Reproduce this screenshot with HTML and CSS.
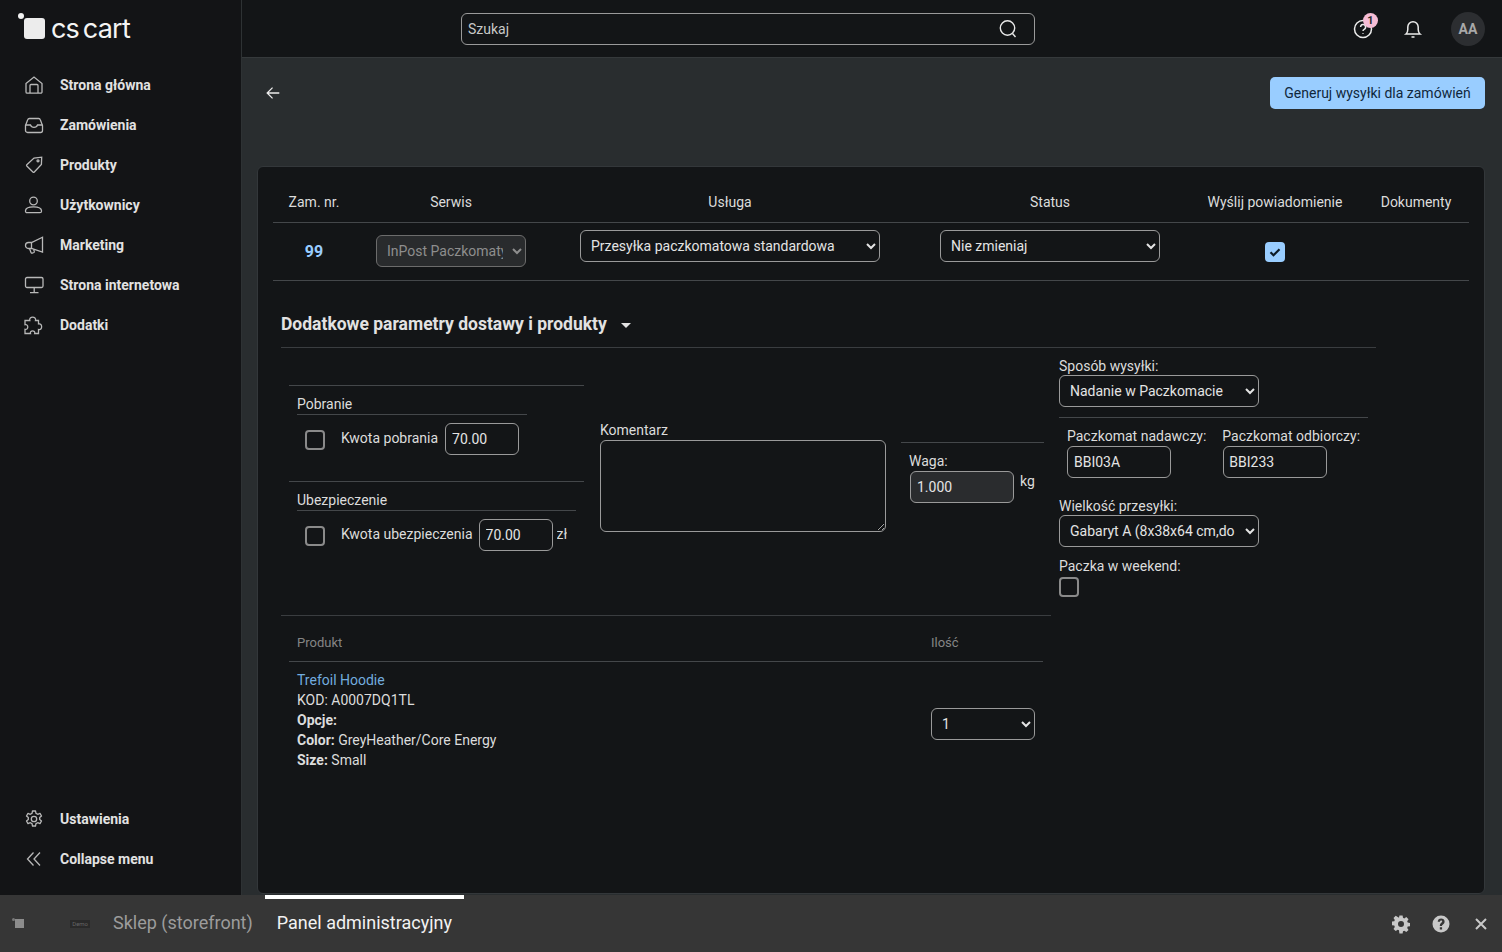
FILE: index.html
```html
<!DOCTYPE html>
<html lang="pl">

<head>
    <meta charset="UTF-8">
    <meta name="viewport" content="width=device-width, initial-scale=1.0">
    <title>Generuj wysyłki</title>

    <link rel="stylesheet" href="styles.css">
</head>

<body>
    <div class="app">
        <aside class="sidebar">
            <div class="logo">
                <span class="logo_dot"></span>
                <span class="logo_box"></span>
                <span class="logo_text">cs cart</span>
            </div>
            <ul class="nav">
                <li><a href="#">
                    <svg viewBox="0 0 20 20"><path d="M2 8.600 10 2l8 6.600v8.400a1.200 1.200 0 0 1-1.200 1.200H3.200A1.200 1.200 0 0 1 2 17z"/><path d="M6 18v-7.500a1 1 0 0 1 1-1h6a1 1 0 0 1 1 1V18"/></svg>
                    Strona główna</a></li>
                <li><a href="#">
                    <svg viewBox="0 0 20 20"><path d="M1.500 10.500 3.700 4.700A1.800 1.800 0 0 1 5.400 3.500h9.200a1.800 1.800 0 0 1 1.700 1.200l2.200 5.800v5a2 2 0 0 1-2 2h-13a2 2 0 0 1-2-2z"/><path d="M1.500 10h5c.5 1.500 1.800 2.300 3.500 2.300s3-.8 3.500-2.300h5"/></svg>
                    Zamówienia</a></li>
                <li><a href="#">
                    <svg viewBox="0 0 20 20"><path d="M2.800 9.700 10 3l7.700-.8-.3 7.200-7.100 7.600a1 1 0 0 1-1.400 0L2.800 11a1 1 0 0 1 0-1.300z"/><circle cx="14" cy="5.800" r="1"/></svg>
                    Produkty</a></li>
                <li><a href="#">
                    <svg viewBox="0 0 20 20"><circle cx="9.500" cy="6" r="3.800"/><path d="M1.500 15.800c0-2.700 3-4 8-4s8 1.300 8 4v.4a1.500 1.500 0 0 1-1.500 1.500H3a1.500 1.500 0 0 1-1.500-1.500z"/></svg>
                    Użytkownicy</a></li>
                <li><a href="#">
                    <svg viewBox="0 0 20 20"><path d="M18.500 2.200v14.800L7.500 13.500H4.500a3 3 0 0 1 0-6h3z"/><path d="M7.500 7.500v6"/><path d="m5.500 13.500 1.500 4a1 1 0 0 0 1.300.6l1.500-.6a1 1 0 0 0 .5-1.300l-.7-1.800"/></svg>
                    Marketing</a></li>
                <li><a href="#">
                    <svg viewBox="0 0 20 20"><rect x="1.500" y="2.500" width="17.500" height="10" rx="1.500"/><path d="M10.200 12.500v5M6 17.700h8.500"/></svg>
                    Strona internetowa</a></li>
                <li><a href="#">
                    <svg viewBox="0 0 20 20"><path d="M1 5.500h4.800c-1.300-4.500 7-4.500 5.700 0h3v3.500c4.200-1.200 4.200 6.800 0 5.500v4h-3.800c1-3.500-5.200-3.500-4.200 0H1v-4.200c3.700 1 3.700-5.600 0-4.600z"/></svg>
                    Dodatki</a></li>
            </ul>
            <ul class="nav nav_bottom">
                <li><a href="#">
                    <svg viewBox="0 0 20 20"><circle cx="10" cy="10" r="2.700"/><path d="M8.500 2h3l.5 2.400 1.700.9 2.300-.9 1.500 2.600-1.800 1.600v1.800l1.800 1.600-1.500 2.600-2.300-.9-1.700.9-.5 2.400h-3l-.5-2.400-1.700-.9-2.300.9-1.500-2.600 1.800-1.600V8.600L2.500 7l1.500-2.600 2.300.9L8 4.400z" stroke-linejoin="round"/></svg>
                    Ustawienia</a></li>
                <li><a href="#">
                    <svg viewBox="0 0 20 20"><path d="M9.500 3.500 3.500 10l6 6.500M16 3.500 10 10l6 6.500"/></svg>
                    Collapse menu</a></li>
            </ul>
        </aside>

        <div class="main">
            <header class="topbar">
                <div class="search">
                    <span class="search_text">Szukaj</span>
                    <svg viewBox="0 0 20 20"><circle cx="9.500" cy="9" r="7.200"/><path d="m14.500 14.500 3 3.500"/></svg>
                </div>
                <div class="top_icons">
                    <div class="help_icon">
                        <svg viewBox="0 0 20 20"><circle cx="10" cy="10" r="8.500"/><path d="M7.600 8a2.500 2.500 0 1 1 3.600 2.300c-.8.400-1.200 1-1.200 1.800"/><path d="M10 14.300v.7"/></svg>
                        <span class="badge">1</span>
                    </div>
                    <svg class="bell" viewBox="0 0 20 20"><path d="M3 15c1.500-1.200 1.800-2.500 1.800-4.500V8a5.200 5.200 0 0 1 10.400 0v2.500c0 2 .3 3.300 1.800 4.500z"/><path d="M8.500 18h3"/></svg>
                    <div class="avatar">AA</div>
                </div>
            </header>

            <div class="toolbar">
                <svg viewBox="0 0 20 20"><path d="M17 10H3.500M9.500 4 3.500 10l6 6"/></svg>
                <button class="btn_primary">Generuj wysyłki dla zamówień</button>
            </div>

            <div class="card">
                <div class="ship_grid ship_head">
                    <div>Zam. nr.</div>
                    <div>Serwis</div>
                    <div>Usługa</div>
                    <div>Status</div>
                    <div>Wyślij powiadomienie</div>
                    <div>Dokumenty</div>
                </div>
                <div class="ship_grid ship_row">
                    <a class="order_no" href="#">99</a>
                    <select class="sel sel_service" disabled>
                        <option>InPost Paczkomaty</option>
                    </select>
                    <select class="sel sel_usluga">
                        <option>Przesyłka paczkomatowa standardowa</option>
                    </select>
                    <select class="sel sel_status">
                        <option>Nie zmieniaj</option>
                    </select>
                    <span class="check checked">
                        <svg viewBox="0 0 20 20"><path d="m5.500 10.200 3 3 6-6"/></svg>
                    </span>
                    <div></div>
                </div>

                <div class="details">
                    <h3 class="details_head">Dodatkowe parametry dostawy i produkty <span class="caret"></span></h3>

                    <div class="details_body">
                        <div class="details_left">
                            <div class="params">
                                <div class="col_money">
                                    <div class="field_group">
                                        <div class="group_title title_short">Pobranie</div>
                                        <div class="money_row">
                                            <span class="check"></span>
                                            <label>Kwota pobrania</label>
                                            <input class="inp inp_small" type="text" value="70.00">
                                        </div>
                                    </div>
                                    <div class="field_group">
                                        <div class="group_title">Ubezpieczenie</div>
                                        <div class="money_row">
                                            <span class="check"></span>
                                            <label class="label_tight">Kwota ubezpieczenia</label>
                                            <input class="inp inp_small" type="text" value="70.00">
                                            <span class="unit">zł</span>
                                        </div>
                                    </div>
                                </div>
                                <div class="col_comment">
                                    <label>Komentarz</label>
                                    <textarea class="inp comment"></textarea>
                                </div>
                                <div class="col_weight">
                                    <label>Waga:</label>
                                    <div class="weight_row">
                                        <input class="inp inp_weight" type="text" value="1.000" readonly>
                                        <span>kg</span>
                                    </div>
                                </div>
                            </div>

                            <div class="products">
                                <div class="prod_grid prod_head">
                                    <div>Produkt</div>
                                    <div>Ilość</div>
                                </div>
                                <div class="prod_grid prod_row">
                                    <div>
                                        <a href="#">Trefoil Hoodie</a><br>
                                        KOD: A0007DQ1TL<br>
                                        <b>Opcje:</b><br>
                                        <b>Color:</b> GreyHeather/Core Energy<br>
                                        <b>Size:</b> Small
                                    </div>
                                    <select class="sel sel_qty">
                                        <option>1</option>
                                    </select>
                                </div>
                            </div>
                        </div>

                        <div class="details_right">
                            <label>Sposób wysyłki:</label>
                            <select class="sel sel_wide">
                                <option>Nadanie w Paczkomacie</option>
                            </select>
                            <div class="points">
                                <div>
                                    <label>Paczkomat nadawczy:</label>
                                    <input class="inp inp_point" type="text" value="BBI03A">
                                </div>
                                <div class="point_second">
                                    <label>Paczkomat odbiorczy:</label>
                                    <input class="inp inp_point" type="text" value="BBI233">
                                </div>
                            </div>
                            <label class="size_label">Wielkość przesyłki:</label>
                            <select class="sel sel_wide">
                                <option>Gabaryt A (8x38x64 cm,do 25 kg)</option>
                            </select>
                            <label class="weekend_label">Paczka w weekend:</label>
                            <span class="check"></span>
                        </div>
                    </div>
                </div>
            </div>
        </div>
    </div>

    <footer class="demo_bar">
        <div class="demo_logo">
            <span class="demo_dot"></span>
            <span class="demo_box"></span>
            <span class="demo_tag">Demo</span>
        </div>
        <a class="demo_tab" href="#">Sklep (storefront)</a>
        <a class="demo_tab demo_active" href="#">Panel administracyjny</a>
        <div class="demo_icons">
            <svg viewBox="0 0 20 20"><path fill-rule="evenodd" d="M8.400 1.500h3.200l.4 2.300 1.300.6 2-1.300 2.200 2.200-1.300 2 .5 1.300 2.300.4v3.200l-2.300.4-.5 1.300 1.300 2-2.200 2.200-2-1.300-1.300.5-.4 2.300H8.400L8 16.300l-1.300-.5-2 1.300-2.200-2.200 1.300-2-.5-1.300-2.300-.4V7.600l2.300-.4.5-1.300-1.300-2 2.200-2.200 2 1.300L8 3.800zM10 7a3 3 0 1 0 0 6 3 3 0 0 0 0-6z"/></svg>
            <svg viewBox="0 0 20 20"><path fill-rule="evenodd" d="M10 1.500a8.500 8.500 0 1 1 0 17 8.500 8.500 0 0 1 0-17zM6.700 7.800h2.200c.1-.8.500-1.200 1.200-1.200s1.100.4 1.100 1c0 1.300-2.400 1.500-2.400 3.900v.5h2.200V12c0-1.500 2.600-1.800 2.600-4.500 0-1.900-1.500-3-3.500-3s-3.300 1.200-3.400 3.300zM8.800 13.300v2.200h2.300v-2.200z"/></svg>
            <svg viewBox="0 0 20 20"><path class="close_x" d="m5 5 10 10M15 5 5 15"/></svg>
        </div>
    </footer>
</body>

</html>
```

FILE: styles.css
```css
* {
    margin: 0;
    padding: 0;
    box-sizing: border-box;
}

html {
    color-scheme: dark;
}

body {
    height: 952px;
    overflow: hidden;
    background-color: #131517;
    color: #dcdcdc;
    font-family: Roboto, "Liberation Sans", sans-serif;
    font-size: 14px;
    line-height: 20px;
}

ul li {
    list-style: none;
}

a {
    text-decoration: none;
}

label {
    display: block;
}

.app {
    display: flex;
    height: 895px;
}

/* sidebar */
.sidebar {
    display: flex;
    flex-direction: column;
    flex: 0 0 242px;
    background-color: #131416;
    border-right: 1px solid #2e3234;
}

.logo {
    display: flex;
    align-items: center;
    position: relative;
    height: 65px;
    padding: 0 0 8px 24px;
}

.logo_dot {
    position: absolute;
    top: 13px;
    left: 18px;
    width: 6px;
    height: 6px;
    border-radius: 50%;
    background-color: #f2f2f2;
}

.logo_box {
    width: 21px;
    height: 21px;
    border-radius: 3px;
    background-color: #ececec;
}

.logo_text {
    margin-left: 6px;
    color: #f4f4f4;
    font-family: Inter, Roboto, sans-serif;
    font-size: 27px;
    line-height: 30px;
    letter-spacing: -0.8px;
    word-spacing: -3px;
}

.nav a {
    display: flex;
    align-items: center;
    gap: 16px;
    height: 40px;
    padding-left: 24px;
    color: #e2e2e2;
    font-weight: 700;
}

.nav svg {
    flex: none;
    width: 20px;
    height: 20px;
    fill: none;
    stroke: #b8b8b8;
    stroke-width: 1.300;
}

.nav_bottom {
    margin-top: auto;
    padding-bottom: 16px;
}

/* top bar */
.main {
    display: flex;
    flex-direction: column;
    flex: 1;
    min-width: 0;
    background-color: #292d2f;
}

.topbar {
    display: flex;
    align-items: center;
    flex: none;
    height: 58px;
    padding: 0 17px 0 219px;
    background-color: #131517;
    border-bottom: 1px solid #35393b;
}

.search {
    display: flex;
    align-items: center;
    justify-content: space-between;
    width: 574px;
    height: 32px;
    padding: 0 16px 0 6px;
    border: 1px solid #9a9a9a;
    border-radius: 6px;
    color: #c8c8c8;
}

.search svg {
    width: 20px;
    height: 20px;
    fill: none;
    stroke: #e8e8e8;
    stroke-width: 1.400;
}

.top_icons {
    display: flex;
    align-items: center;
    margin-left: auto;
}

.help_icon {
    position: relative;
    width: 20px;
    height: 20px;
}

.help_icon svg,
.bell {
    display: block;
    width: 20px;
    height: 20px;
    fill: none;
    stroke: #ececec;
    stroke-width: 1.500;
}

.badge {
    position: absolute;
    top: -6px;
    left: 10px;
    width: 15px;
    height: 15px;
    border-radius: 50%;
    background-color: #f6bdd6;
    color: #2a2a2a;
    font-size: 11px;
    font-weight: 700;
    line-height: 15px;
    text-align: center;
}

.bell {
    margin-left: 30px;
}

.avatar {
    width: 34px;
    height: 34px;
    margin-left: 28px;
    border-radius: 50%;
    background-color: #2c2e31;
    color: #a8a8a8;
    font-weight: 700;
    line-height: 34px;
    text-align: center;
}

/* toolbar */
.toolbar {
    display: flex;
    justify-content: space-between;
    flex: none;
    height: 108px;
    padding: 19px 17px 0 22px;
}

.toolbar svg {
    width: 18px;
    height: 32px;
    fill: none;
    stroke: #ececec;
    stroke-width: 1.400;
}

.btn_primary {
    width: 215px;
    height: 32px;
    border: none;
    border-radius: 5px;
    background-color: #99cdff;
    color: #10273c;
    font-family: inherit;
    font-size: 14px;
}

/* card */
.card {
    flex: 1;
    margin: 0 17px 1px 15px;
    padding: 0 15px;
    background-color: #131517;
    border: 1px solid #33373a;
    border-radius: 6px;
}

.ship_grid {
    display: grid;
    grid-template-columns: 82px 192px 366px 274px 176px 106px;
    justify-items: center;
    border-bottom: 1px solid #44474a;
}

.ship_head {
    align-items: center;
    height: 56px;
    padding-top: 15px;
}

.ship_row {
    align-items: center;
    height: 58px;
}

.order_no {
    color: #99cdff;
    font-size: 16px;
    font-weight: 700;
}

.sel {
    height: 32px;
    padding: 0 6px;
    background-color: transparent;
    border: 1px solid #9a9a9a;
    border-radius: 6px;
    color: #e4e4e4;
    font-family: inherit;
    font-size: 14px;
}

.sel_service {
    width: 150px;
    margin-bottom: 2px;
    background-color: #292b2d;
    color: #8e8e8e;
    opacity: 1;
    border-color: #6c6c6c;
}

.sel_usluga {
    width: 300px;
    margin-bottom: 11px;
}

.sel_status {
    width: 220px;
    margin-bottom: 11px;
}

.check {
    display: block;
    flex: none;
    width: 20px;
    height: 20px;
    border: 2px solid #8a8a8a;
    border-radius: 4px;
}

.check.checked {
    background-color: #99cdff;
    border: none;
}

.check svg {
    display: block;
    fill: none;
    stroke: #0d1a26;
    stroke-width: 2.200;
}

/* details */
.details {
    width: 1095px;
    margin-left: 8px;
}

.details_head {
    height: 67px;
    padding-top: 31px;
    border-bottom: 1px solid #3a3d40;
    color: #e2e2e2;
    font-size: 17.5px;
    line-height: 24px;
}

.caret {
    display: inline-block;
    margin-left: 10px;
    border-top: 5px solid #e2e2e2;
    border-left: 5px solid transparent;
    border-right: 5px solid transparent;
    vertical-align: middle;
}

.details_body {
    display: flex;
}

.details_left {
    flex: 0 0 770px;
}

.params {
    display: flex;
    height: 268px;
    padding-left: 8px;
    border-bottom: 1px solid #3a3d40;
}

.col_money {
    flex: 0 0 295px;
    padding-top: 37px;
}

.field_group {
    height: 96px;
    padding: 8px 0 0 8px;
    border-top: 1px solid #44474a;
}

.group_title {
    width: 279px;
    height: 21px;
    border-bottom: 1px solid #44474a;
}

.title_short {
    width: 230px;
}

.money_row {
    display: flex;
    align-items: center;
    margin-top: 8px;
    padding-left: 8px;
}

.money_row label {
    margin: 0 7px 2px 16px;
}

.money_row .label_tight {
    margin-right: 6px;
}

.money_row .check {
    margin-top: 1px;
}

.unit {
    margin: 0 0 2px 4px;
    width: 10px;
    overflow: hidden;
}

.inp {
    height: 32px;
    padding: 0 6px;
    background-color: transparent;
    border: 1px solid #9a9a9a;
    border-radius: 6px;
    color: #e4e4e4;
    font-family: inherit;
    font-size: 14px;
}

.inp_small {
    width: 74px;
}

.col_comment {
    flex: 0 0 286px;
    margin-left: 16px;
    padding-top: 72px;
}

.comment {
    display: block;
    width: 286px;
    height: 92px;
}

.col_weight {
    flex: 0 0 143px;
    align-self: flex-start;
    margin: 94px 0 0 15px;
    padding: 8px 8px 0;
    border-top: 1px solid #44474a;
}

.weight_row {
    display: flex;
    gap: 6px;
    padding-left: 1px;
}

.inp_weight {
    width: 104px;
    background-color: #2a2c2e;
}

.products {
    padding-left: 8px;
}

.prod_grid {
    display: grid;
    grid-template-columns: 642px 112px;
    width: 754px;
}

.prod_head {
    align-items: center;
    height: 46px;
    padding-top: 8px;
    border-bottom: 1px solid #44474a;
    color: #858585;
    font-size: 13px;
}

.prod_head div:first-child,
.prod_row div:first-child {
    padding-left: 8px;
}

.prod_row {
    align-items: center;
    padding-top: 8px;
}

.prod_row a {
    color: #72acdf;
}

.sel_qty {
    width: 104px;
    margin-top: 8px;
}

.details_right {
    flex: 0 0 309px;
    margin-left: 8px;
    padding-top: 8px;
}

.sel_wide {
    display: block;
    width: 200px;
    margin-top: -1px;
}

.points {
    display: flex;
    margin-top: 10px;
    padding: 8px 0 0 8px;
    border-top: 1px solid #44474a;
}

.point_second {
    margin-left: 16px;
}

.point_second .inp_point {
    margin-left: 1px;
    padding-left: 5px;
}

.inp_point {
    display: block;
    width: 104px;
}

.size_label {
    margin-top: 18px;
}

.weekend_label {
    margin: 9px 0 1px;
}

/* demo bar */
.demo_bar {
    display: flex;
    align-items: stretch;
    height: 57px;
    background-color: #363636;
}

.demo_logo {
    display: flex;
    align-items: center;
    position: relative;
    flex: 0 0 101px;
    padding: 0 11px 0 15px;
}

.demo_dot {
    position: absolute;
    top: 23px;
    left: 12px;
    width: 3px;
    height: 3px;
    border-radius: 50%;
    background-color: #777;
}

.demo_box {
    width: 9px;
    height: 9px;
    background-color: #8c8c8c;
}

.demo_tag {
    margin-left: auto;
    padding: 0 2px;
    background-color: #2a2a2a;
    color: #666;
    font-size: 6px;
    line-height: 8px;
}

.demo_tab {
    padding: 0 12px;
    border-top: 4px solid transparent;
    color: #9c9c9c;
    font-size: 18px;
    line-height: 47px;
}

.demo_active {
    border-top-color: #fff;
    color: #f2f2f2;
}

.demo_icons {
    display: flex;
    align-items: center;
    gap: 20px;
    margin-left: auto;
    padding: 0 11px 0 0;
}

.demo_icons svg {
    width: 20px;
    height: 20px;
    fill: #c8c8c8;
}

.close_x {
    fill: none;
    stroke: #c8c8c8;
    stroke-width: 2;
}
```
